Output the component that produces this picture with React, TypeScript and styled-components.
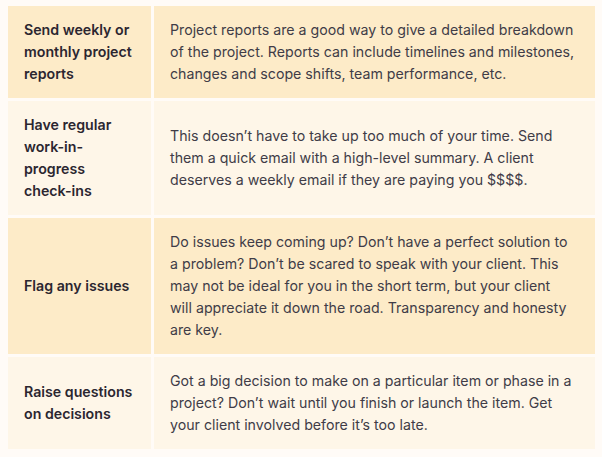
import React from "react";
import styled, { createGlobalStyle } from "styled-components";

const Global = createGlobalStyle`
  html, body { margin: 0; padding: 0; background: #fffbf7; }
  body { font-family: Inter, "Noto Sans", sans-serif; }
`;

const Page = styled.div`
  padding: 6px 0 0 8px;
`;

const Table = styled.div`
  display: grid;
  grid-template-columns: 143px 441px;
  gap: 3px;
  width: 587px;
`;

const Cell = styled.div<{ $alt: boolean }>`
  background: ${(p) => (p.$alt ? "#fef6e8" : "#fdebc8")};
  display: flex;
  align-items: center;
  font-size: 14.2px;
  line-height: 22px;
`;

const Label = styled(Cell)`
  padding: 13px 16px;
  font-weight: 600;
  color: #2b2630;
`;

const Body = styled(Cell)`
  padding: 13px 19px 13px 16px;
  font-weight: 400;
  color: #403c47;
`;

const rows = [
  {
    label: "Send weekly or monthly project reports",
    text: "Project reports are a good way to give a detailed breakdown of the project. Reports can include timelines and milestones, changes and scope shifts, team performance, etc.",
  },
  {
    label: "Have regular work-in-progress check-ins",
    text: "This doesn\u2019t have to take up too much of your time. Send them a quick email with a high-level summary. A client deserves a weekly email if they are paying you $$$$.",
  },
  {
    label: "Flag any issues",
    text: "Do issues keep coming up? Don\u2019t have a perfect solution to a problem? Don\u2019t be scared to speak with your client. This may not be ideal for you in the short term, but your client will appreciate it down the road. Transparency and honesty are key.",
  },
  {
    label: "Raise questions on decisions",
    text: "Got a big decision to make on a particular item or phase in a project? Don\u2019t wait until you finish or launch the item. Get your client involved before it\u2019s too late.",
  },
];

export default function App() {
  return (
    <>
      <Global />
      <Page>
        <Table>
          {rows.map((r, i) => (
            <React.Fragment key={i}>
              <Label $alt={i % 2 === 1}>{r.label}</Label>
              <Body $alt={i % 2 === 1}>{r.text}</Body>
            </React.Fragment>
          ))}
        </Table>
      </Page>
    </>
  );
}
